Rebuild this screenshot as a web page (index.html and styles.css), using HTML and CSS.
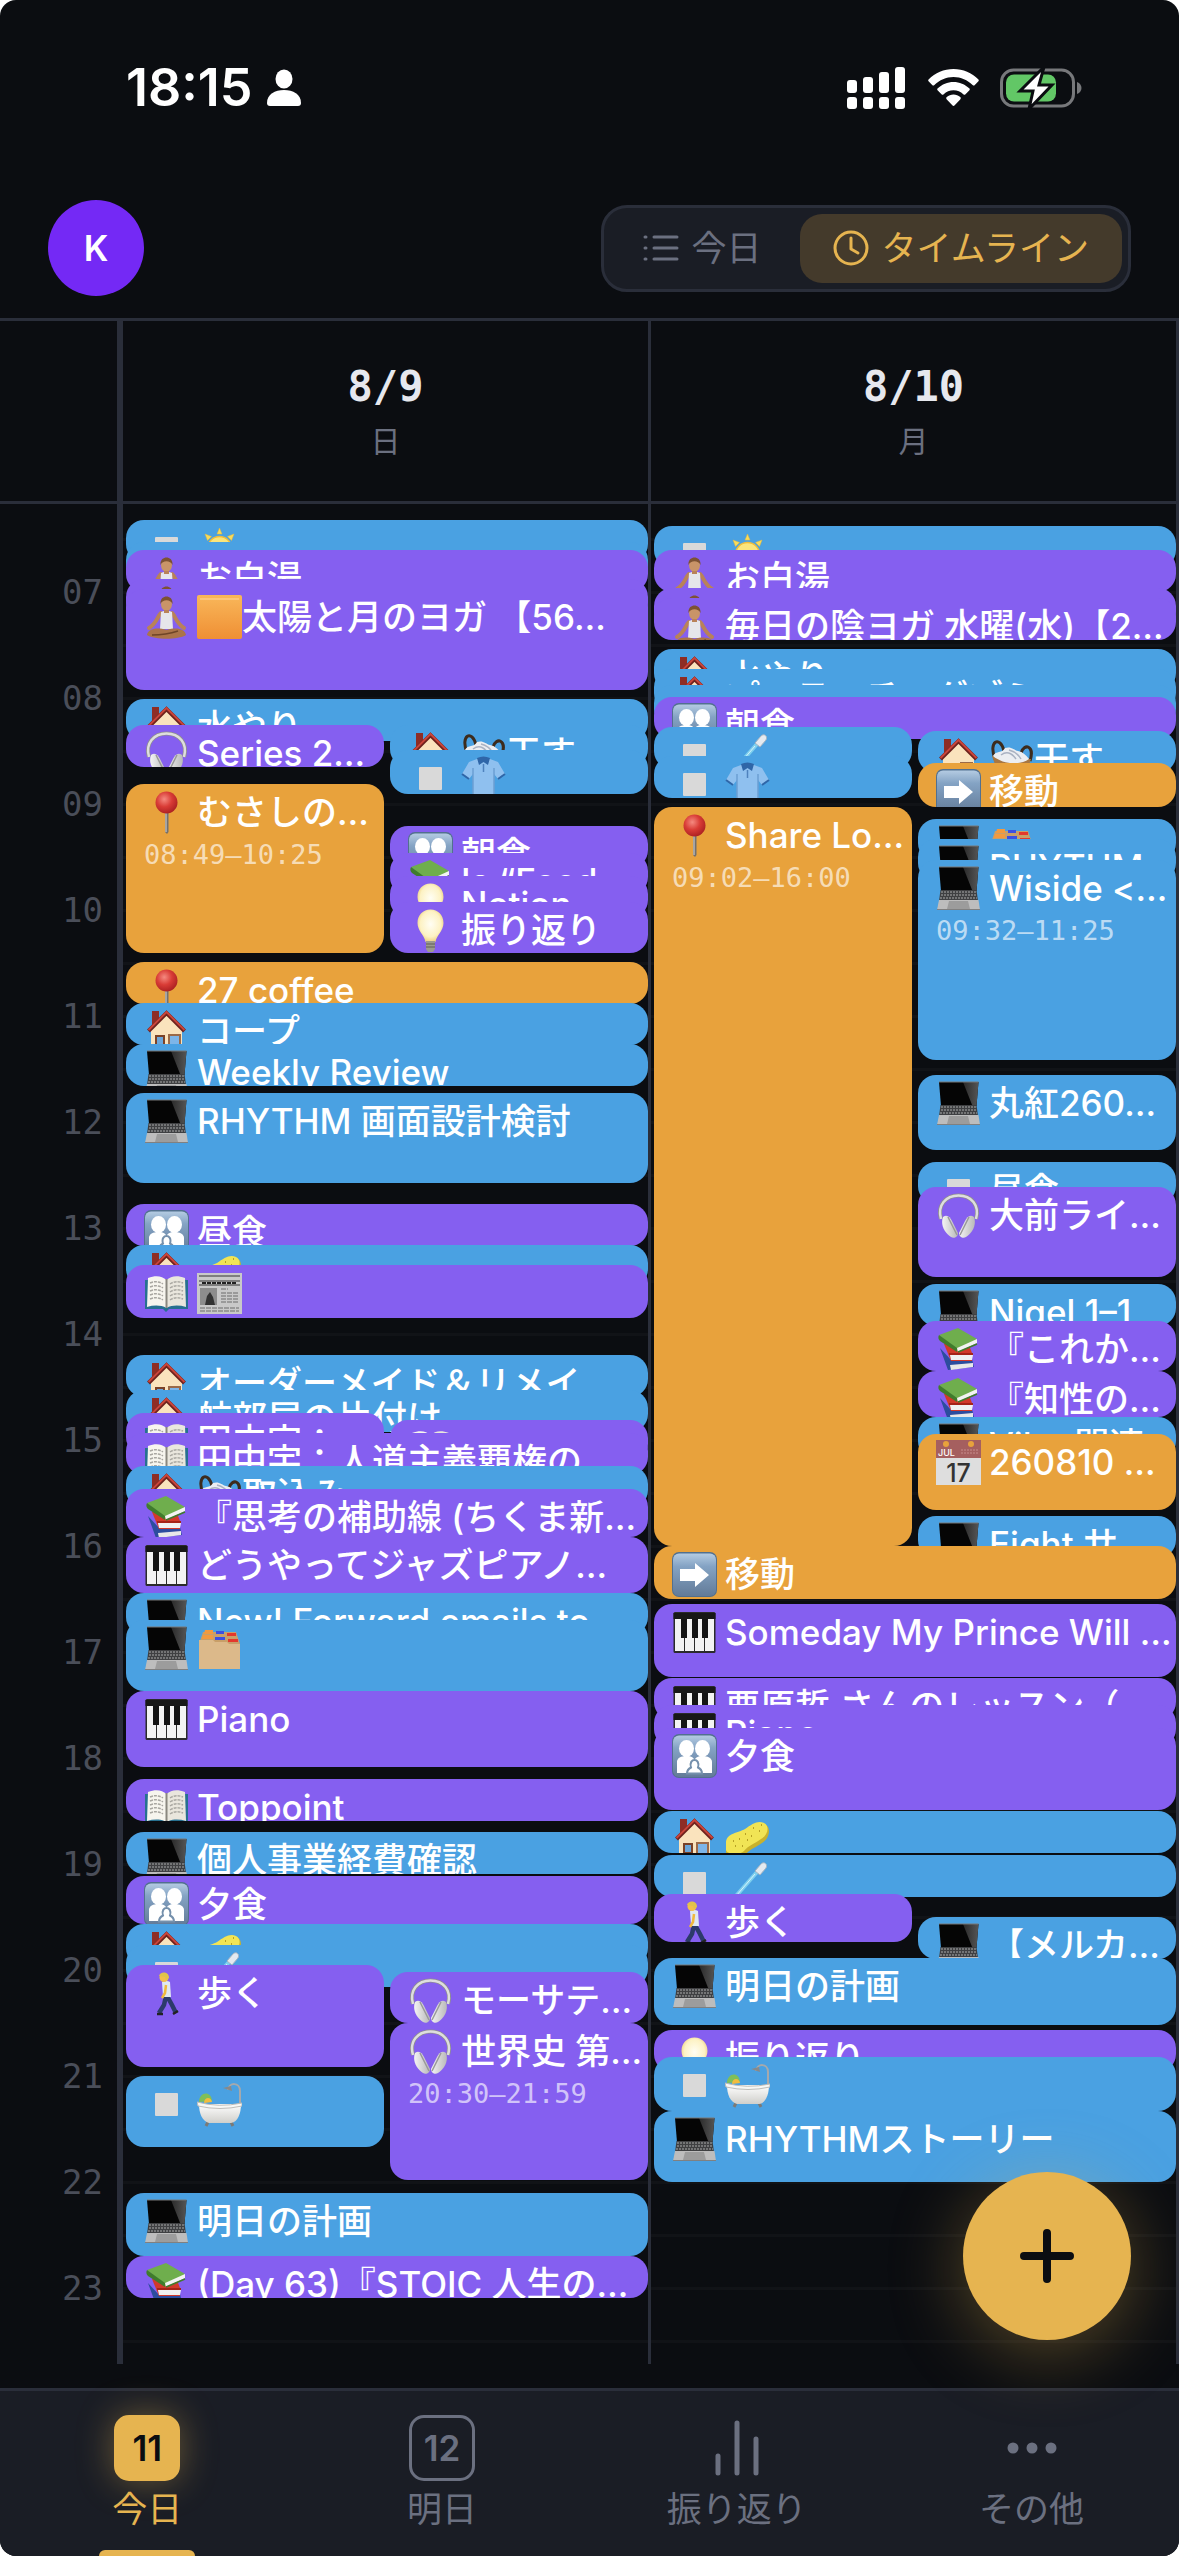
FILE: index.html
```html
<!DOCTYPE html>
<html lang="ja">
<head>
    <meta charset="UTF-8">
    <meta name="viewport" content="width=device-width, initial-scale=1.0">
    <title>タイムライン</title>
    <link rel="stylesheet" href="styles.css">
</head>
<body>

<!-- アイコン定義 -->
<svg class="defs" aria-hidden="true">
    <defs>
        <linearGradient id="gOrange" x1="0" y1="0" x2="0" y2="1"><stop offset="0" stop-color="#f9b75a"/><stop offset="1" stop-color="#ef8f34"/></linearGradient>
        <linearGradient id="gSlate" x1="0" y1="0" x2="0" y2="1"><stop offset="0" stop-color="#b4cbe2"/><stop offset="0.3" stop-color="#84a3c4"/><stop offset="1" stop-color="#637b98"/></linearGradient>
        <linearGradient id="gScreen" x1="0" y1="0" x2="1" y2="0"><stop offset="0" stop-color="#2a2a2a"/><stop offset="1" stop-color="#555"/></linearGradient>
        <radialGradient id="gPin" cx="0.4" cy="0.35" r="0.7"><stop offset="0" stop-color="#f58a80"/><stop offset="0.5" stop-color="#d93c36"/><stop offset="1" stop-color="#a81e20"/></radialGradient>
        <radialGradient id="gBulb" cx="0.5" cy="0.45" r="0.6"><stop offset="0" stop-color="#fffef4"/><stop offset="0.65" stop-color="#fdf2c4"/><stop offset="1" stop-color="#e8c770"/></radialGradient>
        <linearGradient id="gSilver" x1="0" y1="0" x2="1" y2="0"><stop offset="0" stop-color="#f4f4f4"/><stop offset="1" stop-color="#b9b9b9"/></linearGradient>
        <linearGradient id="gTub" x1="0" y1="0" x2="0" y2="1"><stop offset="0" stop-color="#fff"/><stop offset="1" stop-color="#d0cfcb"/></linearGradient>
    </defs>
    <symbol id="house" viewBox="0 0 45 45">
        <path d="M8 2h7v9l-7 6z" fill="#8e2d25"/>
        <path d="M7 20L22.500 5 38 20v21H7z" fill="#fae3bd"/>
        <path d="M4.500 22L22.500 4 40.500 22" fill="none" stroke="#6e221d" stroke-width="4"/>
        <path d="M4.500 21L22.500 3 40.500 21" fill="none" stroke="#c9443a" stroke-width="2"/>
        <path d="M11 26h10v15H11z" fill="#7a4228"/>
        <path d="M13 28h6v7h-6z" fill="#6ba6da"/>
        <path d="M24 25h13v13H24z" fill="#9b6a48"/>
        <path d="M26 27h9v9h-9z" fill="#7db5e8"/>
        <path d="M6 40h33v2H6z" fill="#c19c72"/>
    </symbol>
    <symbol id="laptop" viewBox="0 0 45 45">
        <path d="M3 1h39.500l-2 24h-35.500z" fill="#050505"/>
        <path d="M27 1h15.500l-2 24h-4z" fill="url(#gScreen)"/>
        <path d="M3 1h39.500" stroke="#777" stroke-width="1"/>
        <path d="M4.500 24h36L42 35H3z" fill="#3f4042"/>
        <path d="M5 26h35M5 29h36M4 32h37" stroke="#aaa" stroke-width="1" stroke-dasharray="2 1"/>
        <path d="M3 34h39.500l1.500 10H1z" fill="#bdbdbd"/>
        <path d="M13 35h19l2 8H11z" fill="#9c9c9c"/>
        <path d="M1 43h43v1H1z" fill="#808080"/>
    </symbol>
    <symbol id="books" viewBox="0 0 45 45">
        <path d="M4 21l8 22 26-3-2-8-20 2z" fill="#2c4d9e"/>
        <path d="M14 38l23-2v4l-22 3z" fill="#e8e8e8"/>
        <path d="M8 17l23-4 5 13v8H15z" fill="#d2392a"/>
        <path d="M14 28h23l-1 5H15z" fill="#f1f1f1"/>
        <path d="M13 27h24" stroke="#a62318" stroke-width="2"/>
        <path d="M3 8l19-7 19 11-19 12z" fill="#6fae4d"/>
        <path d="M3 8l18 13v4L4 14c-2-2-2-4-1-6z" fill="#3f7c2c"/>
        <path d="M21 21l20-9v4l-19 9z" fill="#f3f3f3"/>
        <path d="M22 25l19-8" stroke="#3f7c2c" stroke-width="1.500"/>
    </symbol>
    <symbol id="book" viewBox="0 0 45 45">
        <path d="M1 9h43v29H25l-3 3-3-3H1z" fill="#277090"/>
        <path d="M4 7c8-3 14-2 18.500 2v28C17 34 10 34 3 36z" fill="#f7f5ee"/>
        <path d="M41 7c-8-3-14-2-18.500 2v28C28 34 35 34 42 36z" fill="#e9e6dd"/>
        <path d="M22.500 8v29" stroke="#8a877f" stroke-width="2"/>
        <path d="M6 12q7-3 13 1M6 16q7-3 13 1M6 20q7-3 13 1M6 24q7-3 13 1M6 28q7-3 13 1M26 13q6-4 13-1M26 17q6-4 13-1M26 21q6-4 13-1M26 25q6-4 13-1M26 29q6-4 13-1" fill="none" stroke="#a9a7a1" stroke-width="1.500" stroke-dasharray="3 1"/>
    </symbol>
    <symbol id="piano" viewBox="0 0 45 45">
        <rect x="1.500" y="2" width="42" height="41" rx="1.500" fill="#2b2b2b"/>
        <path d="M3 9h9v32H3zM13 9h9v32h-9zM23 9h9v32h-9zM33 9h9v32h-9z" fill="#f3f3f3"/>
        <path d="M9 7h6v21H9zM20 7h6v21h-6zM30 7h6v21h-6z" fill="#141414"/>
        <path d="M1.500 3h42v6h-42z" fill="#181818"/>
    </symbol>
    <symbol id="headphones" viewBox="0 0 45 45">
        <path d="M5 26C1 12 10 2.500 22.500 2.500S44 12 40 26" fill="none" stroke="#8f8f8f" stroke-width="4"/>
        <path d="M5 26C1 12 10 2.500 22.500 2.500S44 12 40 26" fill="none" stroke="#dedede" stroke-width="2.500"/>
        <path d="M7 24c4-3 7 0 9 4l6 12c0 4-4 6-7 4C9 40 4 32 7 24z" fill="url(#gSilver)"/>
        <path d="M38 24c-4-3-7 0-9 4l-6 12c0 4 4 6 7 4 6-4 11-12 8-20z" fill="url(#gSilver)"/>
        <path d="M12 24l9 18M33 24l-9 18" stroke="#999" stroke-width="1.500"/>
    </symbol>
    <symbol id="pin" viewBox="0 0 45 45">
        <path d="M21 22h3.500v20l-1.500 2-2-2z" fill="#74706c"/>
        <path d="M21.500 22h1v20h-1z" fill="#d9d9d9"/>
        <circle cx="22.500" cy="12.500" r="11" fill="url(#gPin)"/>
    </symbol>
    <symbol id="family" viewBox="0 0 45 45">
        <rect width="45" height="44" rx="7" fill="#52708f"/>
        <rect x="1" y="1.500" width="43" height="41.500" rx="6" fill="url(#gSlate)"/>
        <g fill="#fff">
            <ellipse cx="14.500" cy="14.500" rx="7.500" ry="8.500"/>
            <ellipse cx="30.500" cy="14.500" rx="7.500" ry="8.500"/>
            <path d="M5 39V28c0-4 4-6 9.500-6s7 2 8 4c1-2 3-4 8-4s9.500 2 9.500 6v11z"/>
        </g>
        <path d="M15 39.500c0-4 2-5 4-6-3-10 10-10 7 0 2 1 4 2 4 6z" fill="#fff" stroke="#7590ac" stroke-width="2"/>
    </symbol>
    <symbol id="yoga" viewBox="0 0 45 45">
        <path d="M17 18c-4 4-4 10-12 15M28 18c4 4 4 10 12 15" fill="none" stroke="#b98258" stroke-width="4" stroke-linecap="round"/>
        <path d="M17 17q5.500-3 11 0l1 17H16z" fill="#e6e6ea"/>
        <ellipse cx="22.500" cy="9" rx="5.500" ry="7" fill="#c99468"/>
        <path d="M16.500 9c-1-10 13-10 12 0-2-5-10-5-12 0z" fill="#7d5233"/>
        <path d="M20 15h5v3h-5z" fill="#b98258"/>
        <path d="M3 40c1-6 9-8 19.500-5C33 32 41 34 42 40c-8 5-31 5-39 0z" fill="#ab7449"/>
        <path d="M8 40q14 0 26-4" fill="none" stroke="#6f4526" stroke-width="1.500"/>
    </symbol>
    <symbol id="orange" viewBox="0 0 45 45">
        <rect width="45" height="44" rx="2" fill="url(#gOrange)"/>
        <rect x="3" y="3" width="39" height="2" fill="#fcc679"/>
    </symbol>
    <symbol id="sun" viewBox="0 0 45 45">
        <path d="M22.500 2l2.500 6h-5zM22.500 43l2.500-6h-5zM2 22.500l6-2.500v5zM43 22.500l-6-2.500v5zM8 8l6.500 2.500-4 4zM37 8l-6.500 2.500 4 4zM8 37l6.500-2.500-4-4zM37 37l-6.500-2.500 4-4z" fill="#f8dc5c" stroke="#e9b93a" stroke-width="0.500"/>
        <circle cx="22.500" cy="22.500" r="12" fill="#fbe57c" stroke="#f0be3c" stroke-width="1.500"/>
    </symbol>
    <symbol id="square" viewBox="0 0 45 45">
        <rect x="11" y="11" width="23" height="23" rx="1" fill="#d9d9d9"/>
    </symbol>
    <symbol id="basket" viewBox="0 0 45 45">
        <path d="M6 22C-1 4 11-2 15 14M32 16c3-10 14-8 9 8" fill="none" stroke="#3d2b1c" stroke-width="3"/>
        <path d="M3 19l39 3-6 18c-7 5-20 4-26-1z" fill="#a87742"/>
        <path d="M6 27l33 2M8 33l29 2" stroke="#6b4624" stroke-width="2" stroke-dasharray="3 2"/>
        <path d="M4 19c3-6 9-2 12-8 6-2 9 2 13 3 5 1 8 4 11 8-9 7-27 5-36-3z" fill="#eceef2"/>
        <path d="M12 18q8-6 15 4M20 13q8 2 12 9" fill="none" stroke="#aab2c2" stroke-width="1.500"/>
    </symbol>
    <symbol id="shirt" viewBox="0 0 45 45">
        <path d="M16 3l-8 3-7 12 7 5 4-5v25h21V18l4 5 7-5-7-12-8-3z" fill="#8fc0ef"/>
        <path d="M12 12v31M33 12v31" stroke="#6c9fd4" stroke-width="1.500"/>
        <path d="M16 2q6.500-3 13 0l-2 7-4.500-3L18 9z" fill="#2f66a8"/>
        <path d="M1 18l7 5M44 18l-7 5" stroke="#2f66a8" stroke-width="2"/>
        <path d="M22.500 8v8" stroke="#4f82bd" stroke-width="1.500"/>
    </symbol>
    <symbol id="bulb" viewBox="0 0 45 45">
        <path d="M22.500 1.500C15 1.500 9.500 7 9.500 15c0 8 7 12 8 19h10c1-7 8-11 8-19 0-8-5.500-13.500-13-13.500z" fill="url(#gBulb)"/>
        <path d="M18 33h9v8l-2 3h-5l-2-3z" fill="#9c9a90"/>
        <path d="M18 36h9M18 39h9" stroke="#5e5c55" stroke-width="1"/>
    </symbol>
    <symbol id="sponge" viewBox="0 0 45 45">
        <path d="M1 27c1-9 12-9 19-13 7-5 13-10 20-7 7 4 4 15-3 19-7 5-12 6-17 12-6 6-18 4-19-1z" fill="#c9b22c"/>
        <path d="M1 25c1-9 12-9 19-13 7-5 13-9 19-6 6 3 4 12-3 16-7 5-12 6-17 12-6 5-17 3-18-1z" fill="#f1e455"/>
        <path d="M8 24h1M14 22h1M20 17h1M28 11h1M34 14h1M26 19h1M17 29h1M10 29h1M36 8h1M22 23h1" stroke="#b7a225" stroke-width="2"/>
    </symbol>
    <symbol id="newspaper" viewBox="0 0 45 45">
        <rect y="2" width="45" height="41" fill="#c9c9c9"/>
        <path d="M2 5h41M2 10h41M2 14h41" stroke="#666" stroke-width="1.500"/>
        <path d="M5 12h35" stroke="#222" stroke-width="2" stroke-dasharray="4 1"/>
        <path d="M3 17h17v17H3z" fill="#8d8d8d"/>
        <path d="M8 34l2-9 3-4 3 5 2 8z" fill="#333"/>
        <path d="M24 18h7M24 22h18M24 25h18M24 28h18M24 31h18M3 37h39M3 40h39" stroke="#8b8b8b" stroke-width="1.500" stroke-dasharray="5 1"/>
    </symbol>
    <symbol id="dividers" viewBox="0 0 45 45">
        <path d="M6 6h33l4 12H2z" fill="#c99f68"/>
        <path d="M8 4h8v4H7zM6 9h10v4H5z" fill="#f29a3f"/>
        <path d="M19 5h8v3h-8zM18 11h10v3H18z" fill="#3d4fe0"/>
        <path d="M30 7h9v3h-9zM31 13h10v3H31z" fill="#e3382d"/>
        <path d="M2 14h14l2 2h12l2 2h11v25H2z" fill="#dcb98a"/>
    </symbol>
    <symbol id="walk" viewBox="0 0 45 45">
        <path d="M22 25l-2 9-5 8M23 25l5 9 4 8" fill="none" stroke="#2c3a6b" stroke-width="4.500"/>
        <path d="M13 43h6M29 43l5-3" stroke="#222" stroke-width="2.500"/>
        <path d="M18 11q5-2 8 0l1 15h-8z" fill="#dfe8f2"/>
        <path d="M22 14l-1 8-3 5" fill="none" stroke="#f0b93d" stroke-width="2.500"/>
        <circle cx="20" cy="6.500" r="4.500" fill="#f3c04b"/>
        <path d="M15 5c1-5 10-5 10 2l-3 2-1-3z" fill="#e0c34a"/>
    </symbol>
    <symbol id="bath" viewBox="0 0 45 45">
        <path d="M43 22V9c0-9-11-9-12-1" fill="none" stroke="#a6a9ac" stroke-width="2"/>
        <path d="M26 6l8-2 1 5z" fill="#86898c"/>
        <path d="M2 20c0-10 12-12 13-1z" fill="#7fbf5a"/>
        <path d="M7 21c0-6 7-7 8-1z" fill="#f2bc3e"/>
        <path d="M11 40l-2 4M34 40l2 4" stroke="#7b7a77" stroke-width="3"/>
        <path d="M2 22h42c0 9-3 18-10 19H12C5 39 2 31 2 22z" fill="url(#gTub)"/>
        <path d="M0 20q22 6 45 1v3q-22 5-44 0z" fill="#f7f7f5" stroke="#bdbcb8" stroke-width="1"/>
    </symbol>
    <symbol id="brush" viewBox="0 0 45 45">
        <path d="M4 43L32 11" stroke="#7fd0ee" stroke-width="4" stroke-linecap="round"/>
        <path d="M5 42L30 13" stroke="#d6f2fc" stroke-width="1"/>
        <path d="M30 10l6-7c3-3 7 0 5 4l-6 7z" fill="#e4eaf0" stroke="#a5b3c0" stroke-width="1"/>
    </symbol>
    <symbol id="arrow" viewBox="0 0 45 45">
        <rect width="45" height="45" rx="7" fill="#52708f"/>
        <rect x="1" y="1.500" width="43" height="42.500" rx="6" fill="url(#gSlate)"/>
        <path d="M8 17h15v-6l14 12-14 12v-6H8z" fill="#fff"/>
    </symbol>
    <symbol id="calendar" viewBox="0 0 45 45">
        <rect width="45" height="45" fill="#dedede"/>
        <rect width="45" height="18" fill="#a55f5f"/>
        <circle cx="10" cy="4" r="3" fill="#e8a23c"/><circle cx="35" cy="4" r="3" fill="#e8a23c"/>
        <path d="M25 10h18M25 13h18" stroke="#c78d8d" stroke-width="1" stroke-dasharray="2 1"/>
        <text x="2" y="16" class="cal-month">JUL</text>
        <text x="22.500" y="42" class="cal-day">17</text>
    </symbol>
</svg>

<div class="app">
    <div class="status-bar">
        <div class="status-left">
            <span class="clock">18:15</span>
            <svg width="34" height="38" viewBox="0 0 34 38" fill="#fff"><ellipse cx="17" cy="10" rx="8.500" ry="9.500"/><path d="M0 34c0-9 8-13 17-13s17 4 17 13c0 2-1 3-3 3H3c-2 0-3-1-3-3z"/></svg>
        </div>
        <div class="status-right">
            <svg width="60" height="42" viewBox="0 0 60 42" fill="#fff">
                <rect x="0" y="13" width="10" height="13" rx="3"/><rect x="16" y="10" width="10" height="16" rx="3"/><rect x="32" y="5" width="10" height="21" rx="3"/><rect x="48" y="0" width="10" height="26" rx="3"/>
                <rect x="0" y="30" width="10" height="12" rx="3"/><rect x="16" y="30" width="10" height="12" rx="3"/><rect x="32" y="30" width="10" height="12" rx="3"/><rect x="48" y="30" width="10" height="12" rx="3"/>
            </svg>
            <svg width="51" height="38" viewBox="0 0 51 38" fill="#fff">
                <path d="M25.500 0C16 0 7 4 .8 10.200c-.8.800-.8 1.500 0 2.300l3.400 3.500c.7.700 1.500.7 2.200 0C11.500 11 18 8 25.500 8s14 3 19.100 8c.7.700 1.500.7 2.200 0l3.400-3.500c.8-.8.800-1.500 0-2.300C44 4 35 0 25.500 0z"/>
                <path d="M25.500 13c-6 0-11.500 2.300-15.700 6.300-.8.700-.8 1.500 0 2.200l3.700 3.700c.7.700 1.400.7 2.200 0 2.600-2.500 6-4 9.800-4s7.200 1.500 9.800 4c.8.700 1.500.7 2.200 0l3.700-3.700c.8-.7.800-1.500 0-2.200C37 15.300 31.500 13 25.500 13z"/>
                <path d="M25.500 25.500c-2.600 0-4.900 1-6.700 2.600-.8.700-.8 1.500 0 2.300l5.500 5.900c.8.800 1.600.8 2.400 0l5.500-5.900c.8-.8.800-1.600 0-2.300-1.800-1.600-4.100-2.600-6.700-2.600z"/>
            </svg>
            <svg width="83" height="42" viewBox="0 0 83 42">
                <rect x="1.500" y="3" width="72" height="36" rx="12" fill="none" stroke="#77787b" stroke-width="3"/>
                <path d="M77 15c6 2 6 10 0 12z" fill="#77787b"/>
                <rect x="6" y="7.500" width="50" height="27" rx="8" fill="#62c766"/>
                <path d="M44 0L20 24h13l-4 18 23-24H39z" fill="#fff" stroke="#0b0d11" stroke-width="3"/>
            </svg>
        </div>
    </div>

    <header class="top-bar">
        <button class="avatar" type="button">K</button>
        <div class="switch">
            <button type="button" class="switch-item">
                <svg width="36" height="36" viewBox="0 0 36 36" fill="none" stroke="currentColor" stroke-width="3" stroke-linecap="round"><path d="M2 7h1M2 18h1M2 29h1M11 7h23M11 18h23M11 29h23"/></svg>
                今日
            </button>
            <button type="button" class="switch-item active">
                <svg width="36" height="36" viewBox="0 0 36 36" fill="none" stroke="currentColor" stroke-width="3" stroke-linecap="round" stroke-linejoin="round"><circle cx="18" cy="18" r="16"/><path d="M18 8v11l7 4"/></svg>
                タイムライン
            </button>
        </div>
    </header>

    <div class="row dates">
        <div class="gutter"></div>
        <div class="days">
            <div class="day date"><strong>8/9</strong><span>日</span></div>
            <div class="day date"><strong>8/10</strong><span>月</span></div>
        </div>
    </div>

    <main class="row timeline">
        <div class="gutter hours" id="hours"></div>
        <div class="days">
            <section class="day events" id="day1"></section>
            <section class="day events" id="day2"></section>
        </div>
    </main>

    <nav class="tabs">
        <a href="#" class="tab active"><span class="tab-icon day-box">11</span>今日</a>
        <a href="#" class="tab"><span class="tab-icon day-box">12</span>明日</a>
        <a href="#" class="tab">
            <svg class="tab-icon" viewBox="0 0 66 66" fill="none" stroke="currentColor" stroke-width="5" stroke-linecap="round"><path d="M14 41v17M33 8v50M52 24v34"/></svg>
            振り返り
        </a>
        <a href="#" class="tab">
            <svg class="tab-icon" viewBox="0 0 66 66" fill="currentColor"><circle cx="14" cy="33" r="5.500"/><circle cx="33" cy="33" r="5.500"/><circle cx="52" cy="33" r="5.500"/></svg>
            その他
        </a>
    </nav>

    <button class="add" type="button" aria-label="追加">
        <svg width="54" height="54" viewBox="0 0 54 54" stroke="#0b0d11" stroke-width="8" stroke-linecap="round"><path d="M27 4v46M4 27h46"/></svg>
    </button>
</div>

<script src="script.js"></script>
</body>
</html>
```
FILE: styles.css
```css
* {
    box-sizing: border-box;
}

body {
    margin: 0;
    background: #fff;
    color: #fff;
    font-family: Inter, "Noto Sans CJK JP", sans-serif;
    font-size: 35px;
}

button {
    border: none;
    padding: 0;
    font: inherit;
    cursor: pointer;
}

.defs {
    position: absolute;
    width: 0;
    height: 0;
}

.app {
    position: relative;
    display: flex;
    flex-direction: column;
    min-height: 100vh;
    background: #0b0d11;
    border-radius: 16px;
    overflow: hidden;
}

/* ステータスバー */
.status-bar {
    display: flex;
    justify-content: space-between;
    align-items: center;
    padding: 58px 96px 60px 126px;
    line-height: 60px;
}

.status-left, .status-right {
    display: flex;
    align-items: center;
}

.status-left {
    gap: 14px;
}

.status-right {
    gap: 21px;
}

.clock {
    font-size: 52px;
    font-weight: 600;
}

/* ヘッダー */
.top-bar {
    display: flex;
    justify-content: space-between;
    align-items: center;
    padding: 22px 48px;
    border-bottom: 3px solid #2a2e3a;
}

.avatar {
    width: 96px;
    height: 96px;
    border-radius: 50%;
    background: #7429f5;
    color: #fff;
    font-weight: 600;
}

.switch {
    display: flex;
    gap: 6px;
    padding: 6px;
    border: 3px solid #2a2e3a;
    border-radius: 26px;
    background: #1a1d25;
}

.switch-item {
    display: flex;
    align-items: center;
    gap: 12px;
    padding: 0 33px;
    border-radius: 22px;
    background: none;
    color: #6b7080;
    line-height: 69px;
}

.switch-item.active {
    background: #443a2b;
    color: #e6b450;
}

/* 日付とタイムライン */
.row {
    display: flex;
}

.gutter {
    flex: 0 0 120px;
    border-right: 3px solid #2a2e3a;
}

.days {
    flex: 1;
    display: grid;
    grid-template-columns: 1fr 1fr;
    border-right: 3px solid #2a2e3a;
}

.day {
    min-width: 0;
    border-left: 3px solid #2a2e3a;
}

.dates {
    border-bottom: 3px solid #2a2e3a;
}

.date {
    display: flex;
    flex-direction: column;
    align-items: center;
    padding: 39px 0 33px;
    line-height: 54px;
}

.date strong {
    color: #e6e8ee;
    font-family: "DejaVu Sans Mono", monospace;
    font-size: 42px;
}

.date span {
    color: #6b7080;
    font-size: 30px;
}

.timeline {
    margin-bottom: 24px;
}

.hours {
    padding: 35px 14px 0 0;
    color: #4a4e59;
    font-family: "DejaVu Sans Mono", monospace;
    font-size: 34px;
    line-height: 106px;
    text-align: right;
}

.events {
    display: grid;
    grid-template-columns: repeat(2, minmax(0, 1fr));
    grid-template-rows: repeat(1860, 1px);
    column-gap: 6px;
    padding-left: 3px;
    background: repeating-linear-gradient(transparent 0 34px, #111317 34px 37px, transparent 37px 53px);
}

.event {
    grid-column: 1 / 3;
    overflow: hidden;
    padding: 6px 4px 0 18px;
    border-radius: 18px;
}

.event.left {
    grid-column: 1;
}

.event.right {
    grid-column: 2;
}

.event.blue {
    background: #4aa1e2;
}

.event.purple {
    background: #855ff0;
}

.event.orange {
    background: #e8a23c;
}

.event h3 {
    margin: 0;
    overflow: hidden;
    font-size: 35px;
    font-weight: 500;
    line-height: 45px;
    white-space: nowrap;
    text-overflow: ellipsis;
}

.event time {
    display: block;
    color: rgba(255, 255, 255, 0.65);
    font-family: "DejaVu Sans Mono", monospace;
    font-size: 27px;
    line-height: 40px;
}

.emoji {
    width: 45px;
    height: 45px;
    vertical-align: top;
}

.emoji.lead {
    margin-right: 8px;
}

.cal-month {
    fill: #fff;
    font-size: 9px;
}

.cal-day {
    fill: #333;
    font-size: 25px;
    text-anchor: middle;
}

/* 下部タブ */
.tabs {
    display: grid;
    grid-template-columns: repeat(4, 1fr);
    margin-top: auto;
    border-top: 3px solid #2a2e3a;
    background: #1a1d25;
}

.tab {
    position: relative;
    display: flex;
    flex-direction: column;
    align-items: center;
    gap: 6px;
    padding: 24px 0 25px;
    color: #6b7080;
    line-height: 44px;
    text-decoration: none;
}

.tab.active {
    color: #e6b450;
}

.tab.active::after {
    content: "";
    position: absolute;
    bottom: 0;
    width: 96px;
    height: 6px;
    border-radius: 6px 6px 0 0;
    background: #e6b450;
}

.tab-icon {
    width: 66px;
    height: 66px;
}

.day-box {
    border: 3px solid #6b7080;
    border-radius: 15px;
    font-weight: 600;
    line-height: 60px;
    text-align: center;
}

.active .day-box {
    border-color: #e6b450;
    background: #e6b450;
    color: #0b0d11;
    box-shadow: 0 0 36px rgba(230, 180, 80, 0.4);
}

.add {
    position: absolute;
    right: 48px;
    bottom: 216px;
    display: flex;
    align-items: center;
    justify-content: center;
    width: 168px;
    height: 168px;
    border-radius: 50%;
    background: #e6b450;
    box-shadow: 0 12px 72px rgba(230, 180, 80, 0.35);
}
```
FILE: script.js
```js
// [開始位置, 高さ, 列, 色, アイコン, タイトル, 時刻]
// タイトル内の {name} は絵文字アイコンに置き換える
const day1 = [
    [16, 42, 'full', 'blue', 'square', '{sun}'],
    [38, 42, 'full', 'blue', 'square', ''],
    [46, 42, 'full', 'purple', 'yoga', 'お白湯'],
    [75, 42, 'full', 'purple', 'yoga', ''],
    [85, 101, 'full', 'purple', 'yoga', '{orange}太陽と月のヨガ 【56…'],
    [195, 42, 'full', 'blue', 'house', '水やり'],
    [221, 42, 'left', 'purple', 'headphones', 'Series 2…'],
    [221, 42, 'right', 'blue', 'house', '{basket}干す'],
    [246, 44, 'right', 'blue', 'square', '{shirt}'],
    [280, 169, 'left', 'orange', 'pin', 'むさしの…', '08:49–10:25'],
    [322, 42, 'right', 'purple', 'family', '朝食'],
    [349, 42, 'right', 'purple', 'books', 'Is “Feed'],
    [372, 42, 'right', 'purple', 'bulb', 'Notion'],
    [398, 51, 'right', 'purple', 'bulb', '振り返り'],
    [458, 42, 'full', 'orange', 'pin', '27 coffee'],
    [499, 42, 'full', 'blue', 'house', 'コープ'],
    [540, 42, 'full', 'blue', 'laptop', 'Weekly Review'],
    [589, 90, 'full', 'blue', 'laptop', 'RHYTHM 画面設計検討'],
    [700, 42, 'full', 'purple', 'family', '昼食'],
    [741, 42, 'full', 'blue', 'house', '{sponge}'],
    [761, 53, 'full', 'purple', 'book', '{newspaper}'],
    [851, 42, 'full', 'blue', 'house', 'オーダーメイド＆リメイ'],
    [886, 42, 'full', 'blue', 'house', '航部屋の片付け'],
    [909, 42, 'left', 'purple', 'book', '田中宇：'],
    [916, 42, 'right', 'purple', 'book', ''],
    [929, 42, 'full', 'purple', 'book', '田中宇：人道主義覇権の'],
    [962, 42, 'full', 'blue', 'house', '{basket}取込み'],
    [985, 48, 'full', 'purple', 'books', '『思考の補助線 (ちくま新…'],
    [1033, 56, 'full', 'purple', 'piano', 'どうやってジャズピアノ…'],
    [1089, 42, 'full', 'blue', 'laptop', 'New! Forward emails to'],
    [1116, 71, 'full', 'blue', 'laptop', '{dividers}'],
    [1187, 76, 'full', 'purple', 'piano', 'Piano'],
    [1275, 42, 'full', 'purple', 'book', 'Toppoint'],
    [1328, 42, 'full', 'blue', 'laptop', '個人事業経費確認'],
    [1372, 48, 'full', 'purple', 'family', '夕食'],
    [1420, 42, 'full', 'blue', 'house', '{sponge}'],
    [1441, 42, 'full', 'blue', 'square', '{brush}'],
    [1461, 102, 'left', 'purple', 'walk', '歩く'],
    [1468, 51, 'right', 'purple', 'headphones', 'モーサテ…'],
    [1519, 157, 'right', 'purple', 'headphones', '世界史 第…', '20:30–21:59'],
    [1572, 71, 'left', 'blue', 'square', '{bath}'],
    [1689, 63, 'full', 'blue', 'laptop', '明日の計画'],
    [1752, 42, 'full', 'purple', 'books', '(Day 63)『STOIC 人生の…']
];

const day2 = [
    [22, 42, 'full', 'blue', 'square', '{sun}'],
    [46, 42, 'full', 'purple', 'yoga', 'お白湯'],
    [84, 42, 'full', 'purple', 'yoga', ''],
    [94, 42, 'full', 'purple', 'yoga', '毎日の陰ヨガ 水曜(水)【2…'],
    [145, 42, 'full', 'blue', 'house', '水やり'],
    [165, 42, 'full', 'blue', 'house', 'プロテーチ、ダブミ'],
    [181, 42, 'full', 'blue', 'square', ''],
    [193, 42, 'full', 'purple', 'family', '朝食'],
    [223, 42, 'left', 'blue', 'square', '{brush}'],
    [252, 42, 'left', 'blue', 'square', '{shirt}'],
    [227, 42, 'right', 'blue', 'house', '{basket}干す'],
    [259, 44, 'right', 'orange', 'arrow', '移動'],
    [303, 739, 'left', 'orange', 'pin', 'Share Lo…', '09:02–16:00'],
    [315, 42, 'right', 'blue', 'laptop', '{dividers}'],
    [335, 42, 'right', 'blue', 'laptop', 'RHYTHM'],
    [356, 200, 'right', 'blue', 'laptop', 'Wiside <…', '09:32–11:25'],
    [571, 75, 'right', 'blue', 'laptop', '丸紅260…'],
    [658, 42, 'right', 'blue', 'square', '昼食'],
    [683, 90, 'right', 'purple', 'headphones', '大前ライ…'],
    [780, 42, 'right', 'blue', 'laptop', 'Nigel 1–1'],
    [817, 50, 'right', 'purple', 'books', '『これか…'],
    [867, 46, 'right', 'purple', 'books', '『知性の…'],
    [913, 42, 'right', 'blue', 'laptop', 'Vibe 関連'],
    [930, 76, 'right', 'orange', 'calendar', '260810 …'],
    [1012, 42, 'right', 'blue', 'laptop', 'Eight サ'],
    [1042, 53, 'full', 'orange', 'arrow', '移動'],
    [1100, 73, 'full', 'purple', 'piano', 'Someday My Prince Will …'],
    [1174, 42, 'full', 'purple', 'piano', '栗原哲 さんのレッスン（'],
    [1201, 42, 'full', 'purple', 'piano', 'Piano'],
    [1224, 82, 'full', 'purple', 'family', '夕食'],
    [1307, 42, 'full', 'blue', 'house', '{sponge}'],
    [1351, 42, 'full', 'blue', 'square', '{brush}'],
    [1390, 48, 'left', 'purple', 'walk', '歩く'],
    [1413, 42, 'right', 'blue', 'laptop', '【メルカ…'],
    [1454, 67, 'full', 'blue', 'laptop', '明日の計画'],
    [1526, 42, 'full', 'purple', 'bulb', '振り返り'],
    [1553, 54, 'full', 'blue', 'square', '{bath}'],
    [1607, 71, 'full', 'blue', 'laptop', 'RHYTHMストーリー']
];

function icon(name, extra) {
    return `<svg class="emoji ${extra || ''}"><use href="#${name}"/></svg>`;
}

function renderDay(id, events) {
    document.getElementById(id).innerHTML = events.map(([start, height, col, color, lead, title, time]) => {
        const text = title.replace('<', '&lt;').replace(/\{(\w+)\}/g, (m, name) => icon(name));
        return `<article class="event ${col} ${color}" style="grid-row: ${start + 1} / span ${height}">
            <h3>${icon(lead, 'lead')}${text}</h3>
            ${time ? `<time>${time}</time>` : ''}
        </article>`;
    }).join('');
}

function renderHours() {
    let html = '';
    for (let h = 7; h <= 23; h++) {
        html += `<div>${String(h).padStart(2, '0')}</div>`;
    }
    document.getElementById('hours').innerHTML = html;
}

renderHours();
renderDay('day1', day1);
renderDay('day2', day2);
```
